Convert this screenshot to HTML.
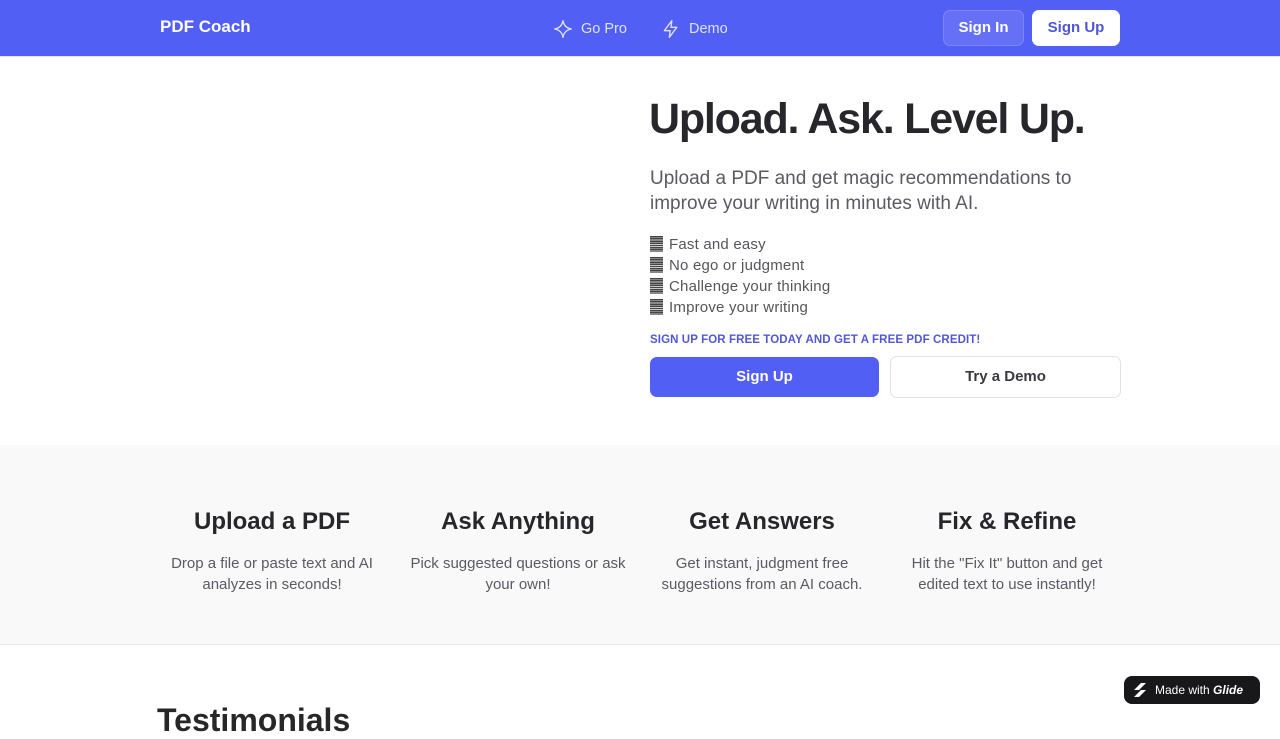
<!DOCTYPE html>
<html><head><meta charset="utf-8"><style>
*{margin:0;padding:0;box-sizing:border-box}
body{width:1280px;height:720px;overflow:hidden;font-family:"Liberation Sans",sans-serif;background:#fff;color:#27272a;position:relative}
.nav{height:57px;background:#525ff5;border-bottom:1px solid #e4e4f0;position:relative}
.logo{position:absolute;left:160px;top:17px;color:#fff;font-weight:700;font-size:17px}
.nl{position:absolute;top:19px;color:#dfe1ff;font-size:14.5px;display:flex;align-items:center;gap:8px}
.btn1{position:absolute;left:943px;top:10px;width:81px;height:36px;border:1px solid #7c86f8;background:#6670f6;border-radius:7px;color:#fff;font-weight:700;font-size:15px;text-align:center;line-height:34px}
.btn2{position:absolute;left:1032px;top:10px;width:88px;height:36px;background:#fff;border-radius:7px;color:#4f56d8;font-weight:700;font-size:15px;text-align:center;line-height:36px}
h1{position:absolute;left:649px;top:95px;font-size:43px;font-weight:700;letter-spacing:-1.2px;color:#26262b}
.sub{position:absolute;left:650px;top:166px;width:440px;font-size:19px;line-height:25px;color:#5a5a62}
.list{position:absolute;left:650px;top:234px;font-size:15px;line-height:21px;color:#55555c;letter-spacing:0.2px}
.b{display:inline-block;width:13px;height:16px;vertical-align:-3px;margin-right:6px;background:repeating-linear-gradient(#444 0 1.4px,#ccc 1.4px 2.2px)}
.cta{position:absolute;left:650px;top:334px;font-size:11.5px;font-weight:700;color:#5058d6;letter-spacing:0.1px}
.s1{position:absolute;left:650px;top:357px;width:229px;height:40px;background:#525ff5;border-radius:7px;color:#fff;font-weight:700;font-size:15px;text-align:center;line-height:40px}
.s2{position:absolute;left:890px;top:356px;width:231px;height:42px;border:1px solid #e2e2e6;border-radius:7px;color:#3a3a40;font-weight:700;font-size:15px;text-align:center;line-height:40px}
.feat{position:absolute;left:0;top:445px;width:1280px;height:200px;background:#f9f9f9;border-bottom:1px solid #e6e6e6}
.f{position:absolute;top:63px;width:230px;text-align:center}
.f h3{font-size:24px;font-weight:600;color:#27272a;margin-bottom:17px}
.f p{font-size:15px;line-height:21px;color:#5a5a62;padding:0 6px}
.test{position:absolute;left:157px;top:702px;font-size:32px;font-weight:700;color:#27272a}
.glide{position:absolute;left:1124px;top:676px;width:136px;height:28px;background:#18181b;border-radius:8px;color:#fff;font-size:12px;line-height:28px;padding-left:31px}
</style></head><body>
<div class="nav">
<div class="logo">PDF Coach</div>
<div class="nl" style="left:553px"><svg width="20" height="20" viewBox="0 0 24 24" fill="none" stroke="#dfe1ff" stroke-width="1.6" stroke-linejoin="round"><path d="M12 2C13 8 16 11 22 12C16 13 13 16 12 22C11 16 8 13 2 12C8 11 11 8 12 2Z"/></svg>Go Pro</div>
<div class="nl" style="left:661px"><svg width="20" height="20" viewBox="0 0 24 24" fill="none" stroke="#dfe1ff" stroke-width="1.6" stroke-linejoin="round"><path d="M13 2L4 14h7l-1 8 9-12h-7z"/></svg>Demo</div>
<div class="btn1">Sign In</div>
<div class="btn2">Sign Up</div>
</div>
<h1>Upload. Ask. Level Up.</h1>
<div class="sub">Upload a PDF and get magic recommendations to improve your writing in minutes with AI.</div>
<div class="list"><div><span class="b"></span>Fast and easy</div><div><span class="b"></span>No ego or judgment</div><div><span class="b"></span>Challenge your thinking</div><div><span class="b"></span>Improve your writing</div></div>
<div class="cta">SIGN UP FOR FREE TODAY AND GET A FREE PDF CREDIT!</div>
<div class="s1">Sign Up</div>
<div class="s2">Try a Demo</div>
<div class="feat">
<div class="f" style="left:157px"><h3>Upload a PDF</h3><p>Drop a file or paste text and AI analyzes in seconds!</p></div>
<div class="f" style="left:403px"><h3>Ask Anything</h3><p>Pick suggested questions or ask your own!</p></div>
<div class="f" style="left:647px"><h3>Get Answers</h3><p>Get instant, judgment free suggestions from an AI coach.</p></div>
<div class="f" style="left:892px"><h3>Fix &amp; Refine</h3><p>Hit the "Fix It" button and get edited text to use instantly!</p></div>
</div>
<div class="test">Testimonials</div>
<div class="glide"><svg style="position:absolute;left:8px;top:7px" width="16" height="14" viewBox="0 0 16 14"><path d="M2 7L9 0h5L7 7zM14 7L7 14H2l7-7z" fill="#fff"/></svg>Made with <b><i>Glide</i></b></div>
</body></html>
